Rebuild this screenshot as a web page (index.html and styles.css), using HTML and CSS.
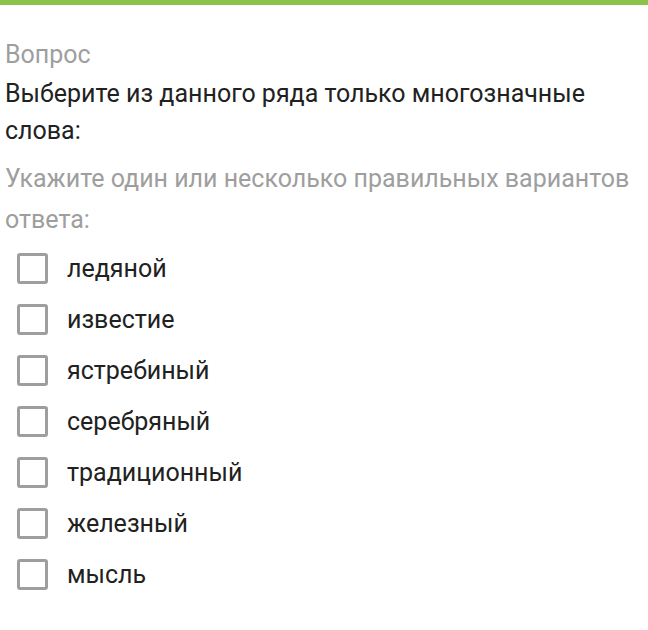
FILE: index.html
```html
<!DOCTYPE html>
<html lang="ru">
<head>
    <meta charset="UTF-8">
    <meta name="viewport" content="width=device-width, initial-scale=1.0">
    <title>Вопрос</title>
    <link rel="stylesheet" href="styles.css">
</head>
<body>

    <!-- Top bar -->
    <div class="top-bar"></div>

    <!-- Question -->
    <div class="question">
        <div class="question-label">Вопрос</div>
        <div class="question-text">Выберите из данного ряда только многозначные слова:</div>
        <div class="question-hint">Укажите один или несколько правильных вариантов ответа:</div>

        <ul class="options">
            <li><span class="box"></span>ледяной</li>
            <li><span class="box"></span>известие</li>
            <li><span class="box"></span>ястребиный</li>
            <li><span class="box"></span>серебряный</li>
            <li><span class="box"></span>традиционный</li>
            <li><span class="box"></span>железный</li>
            <li><span class="box"></span>мысль</li>
        </ul>
    </div>

</body>
</html>
```

FILE: styles.css
```css
body {
    font-family: Roboto, "Noto Sans", sans-serif;
    margin: 0;
    padding: 0;
    background-color: #fff;
    color: #212121;
}
.top-bar {
    height: 5px;
    background-color: #8bc34a;
}
.question {
    padding: 34px 10px 0 5px;
}
.question-label {
    color: #9e9e9e;
    font-size: 25px;
    line-height: 32px;
}
.question-text {
    font-size: 25px;
    line-height: 37px;
    margin-top: 4px;
}
.question-hint {
    color: #9e9e9e;
    font-size: 25px;
    line-height: 41px;
    margin-top: 9px;
}
.options {
    list-style: none;
    margin: 3px 0 0 0;
    padding: 0 0 0 12px;
}
.options li {
    display: flex;
    align-items: center;
    height: 51px;
    font-size: 25px;
}
.box {
    width: 25px;
    height: 25px;
    border: 3px solid #9e9e9e;
    border-radius: 3px;
    margin-right: 19px;
}
```
